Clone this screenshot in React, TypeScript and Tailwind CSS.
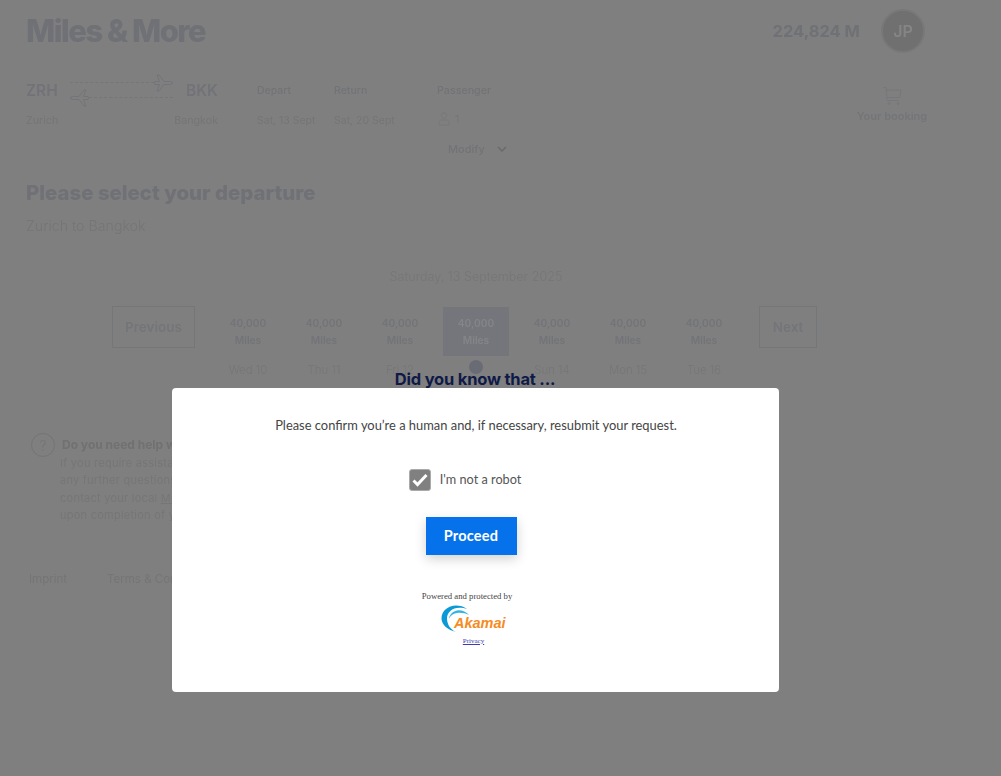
import React from "react";

const Plane = ({ flip }: { flip?: boolean }) => (
  <svg width="19" height="18" viewBox="0 0 19 18" fill="none" stroke="#727377" strokeWidth="0.9" className={"shrink-0 " + (flip ? "rotate-180" : "")}>
    <path d="M1 7.500h4.500L3 1h2l5 6.500h5.500c2 0 3 .8 3 1.500s-1 1.500-3 1.500H10L5 17H3l2.500-6.500H1l-.5-1.500z" />
  </svg>
);

const days = ["Wed 10", "Thu 11", "Fri 12", "", "Sun 14", "Mon 15", "Tue 16"];

function Background() {
  return (
    <div className="h-[776px] overflow-hidden bg-[#7f7f7f] blur-[0.45px] font-['Inter',sans-serif]">
      <div className="flex items-center pl-[26px] pr-[76px] h-[62px]">
        <div className="text-[31px] leading-[44px] font-extrabold tracking-[-1.5px] text-[#6f7176]">Miles &amp; More</div>
        <div className="ml-auto text-[16.500px] font-bold text-[#6f7176]">224,824 M</div>
        <div className="ml-[21px] w-[44px] h-[44px] rounded-full bg-[#707070] border-2 border-[#787878] flex items-center justify-center text-[16px] font-semibold text-[#858585]">JP</div>
      </div>

      <div className="flex pl-[26px] pr-[75px] pt-[17px] h-[78px]">
        <div className="w-[192px]">
          <div className="flex items-center justify-between h-[24px]">
            <span className="text-[15.500px] font-semibold text-[#727378]">ZRH</span>
            <div className="flex flex-col w-[103px] -mt-[2px]">
              <div className="flex items-center h-[15px]">
                <div className="flex-1 border-t border-dashed border-[#757679]" />
                <Plane />
              </div>
              <div className="flex items-center h-[15px]">
                <Plane flip />
                <div className="flex-1 border-t border-dashed border-[#757679]" />
              </div>
            </div>
            <span className="text-[15.500px] font-semibold text-[#727378]">BKK</span>
          </div>
          <div className="flex justify-between mt-[9px] text-[10.700px] leading-[18px] text-[#757575]">
            <span>Zurich</span>
            <span>Bangkok</span>
          </div>
        </div>
        <div className="ml-[39px] w-[77px]">
          <div className="text-[10.500px] leading-[24px] font-medium text-[#727377]">Depart</div>
          <div className="mt-[9px] text-[10.500px] leading-[18px] text-[#757575] whitespace-nowrap">Sat, 13 Sept</div>
        </div>
        <div className="w-[103px]">
          <div className="text-[10.500px] leading-[24px] font-medium text-[#727377]">Return</div>
          <div className="mt-[9px] text-[10.500px] leading-[18px] text-[#757575] whitespace-nowrap">Sat, 20 Sept</div>
        </div>
        <div>
          <div className="text-[10.700px] leading-[20px] font-medium text-[#727377] mt-[2px]">Passenger</div>
          <div className="flex items-center gap-[4px] mt-[9px] h-[18px] text-[11px] text-[#757575]">
            <svg width="14" height="14" viewBox="0 0 14 14" fill="none" stroke="#757679" strokeWidth="0.8">
              <circle cx="7" cy="3.500" r="2.700" />
              <path d="M2 13V10.500c0-1.500 1-2.500 2.500-2.500h5c1.500 0 2.500 1 2.500 2.500V13z" />
            </svg>
            <span>1</span>
          </div>
        </div>
        <div className="ml-auto flex flex-col items-center pt-[7px] w-[68px]">
          <svg width="20" height="20" viewBox="0 0 20 20" fill="none" stroke="#757679" strokeWidth="0.9">
            <path d="M1 1.500h3l1 13h12M4.200 4h14.800l-1.200 7.500H4.800" />
            <circle cx="7" cy="17.500" r="1" />
            <circle cx="16" cy="17.500" r="1" />
          </svg>
          <span className="text-[11px] font-semibold text-[#747579] whitespace-nowrap leading-[20px]">Your booking</span>
        </div>
      </div>

      <div className="flex items-center ml-[448px] h-[18px]">
        <span className="text-[11px] font-medium text-[#727377]">Modify</span>
        <svg className="ml-[11px]" width="12" height="12" viewBox="0 0 12 12" fill="none" stroke="#66686d" strokeWidth="1.300">
          <path d="M2 4l4 4 4-4" />
        </svg>
      </div>

      <div className="pl-[26px] mt-[19px]">
        <div className="text-[20.400px] leading-[32px] font-extrabold text-[#707176]">Please select your departure</div>
        <div className="mt-[6px] text-[14.200px] leading-[22px] font-light text-[#757575]">Zurich to Bangkok</div>
      </div>

      <div className="mt-[27px] pr-[49px] text-center text-[12.600px] leading-[26px] font-light text-[#767676]">Saturday, 13 September 2025</div>

      <div className="relative mt-[17px] pl-[112px] flex items-start h-[88px]">
        <div className="w-[83px] h-[42px] -mt-px border border-[#757679] flex items-center justify-center text-[13.500px] font-semibold text-[#747579]">Previous</div>
        <div className="ml-[15px] flex">
          {days.map((d, i) => (
            <div key={i} className="w-[76px] flex flex-col items-center">
              <div className={"w-[66px] h-[49px] flex flex-col items-center justify-center text-[10.200px] font-semibold leading-[17px] " + (i === 3 ? "bg-[#74767c] text-[#848588]" : "text-[#737478]")}>
                <span>40,000</span>
                <span>Miles</span>
              </div>
              {d ? (
                <span className="mt-[5px] text-[11.400px] leading-[18px] font-light text-[#767676]">{d}</span>
              ) : (
                <span className="mt-[4px] w-[14px] h-[14px] rounded-full bg-[#696c74]" />
              )}
            </div>
          ))}
        </div>
        <div className="ml-[17px] w-[58px] h-[42px] -mt-px border border-[#757679] flex items-center justify-center text-[13.500px] font-semibold text-[#747579]">Next</div>
      </div>

      <div className="pl-[31px] mt-[38px] flex items-start">
        <div className="w-[24px] h-[24px] rounded-full border border-[#747474] flex items-center justify-center text-[14px] font-light text-[#747474]">?</div>
        <div className="ml-[5px] mt-[1px]">
          <div className="ml-[2px] text-[12px] leading-[21px] font-bold text-[#717171] whitespace-nowrap">Do you need help with your booking?</div>
          <div className="text-[11px] leading-[17.400px] tracking-[0.25px] text-[#767676] whitespace-nowrap">
            <div>If you require assistance with your booking, or if you have</div>
            <div>any further questions about your award flight, please</div>
            <div>contact your local <span className="underline">Miles &amp; More service team</span></div>
            <div>upon completion of your reservation.</div>
          </div>
        </div>
      </div>

      <div className="pl-[29px] mt-[45px] flex gap-[40px] text-[11.500px] leading-[18px] text-[#757575]">
        <span>Imprint</span>
        <span>Terms &amp; Conditions</span>
      </div>
    </div>
  );
}

function Akamai() {
  return (
    <div className="relative h-[30px] w-[66px]">
      <svg className="absolute left-0 top-0" width="34" height="28" viewBox="0 0 34 28" fill="none">
        <path d="M15 27C7 25 0.500 20 0.500 13.500 0.500 6 7 0.500 15 0.500c4 0 8 1 11 3.500-2-.8-5-1.300-7.500-1.300C11 2.700 6 7.500 6 13.500 6 19 9 24.500 15 27z" fill="#0b9ad6" />
        <path d="M28 10C25 6.500 20 4.800 16 5.500 12 6.300 8.500 9.500 8 13.500c2-3.500 5.500-5.500 9.500-5.700 3.500-.2 7.500.7 10.500 2.200z" fill="#34b4e4" />
      </svg>
      <span className="absolute left-[13px] top-[8px] text-[14.500px] leading-[20px] font-bold italic text-[#f68b1f] font-['Liberation_Sans',sans-serif]">Akamai</span>
    </div>
  );
}

export default function App() {
  return (
    <div className="relative h-[776px] overflow-hidden">
      <Background />
      <div className="absolute inset-0 flex flex-col items-center pt-[366px] pr-[51px]">
        <div className="w-[607px] text-center text-[16.500px] leading-[26px] font-bold tracking-[-0.2px] text-[#0f1a47] font-['Inter',sans-serif]">Did you know that ...</div>
        <div className="-mt-[4px] w-[607px] h-[304px] bg-white rounded-[4px] flex flex-col items-center font-['Lato',sans-serif] text-[#4a4a4a]">
          <div className="mt-[27px] ml-[2px] text-[12.900px] leading-[20px] text-[#444]">Please confirm you’re a human and, if necessary, resubmit your request.</div>
          <div className="mt-[34px] ml-[-20px] flex items-center h-[22px]">
            <div className="w-[22px] h-[22px] rounded-[3px] bg-[#808080] border border-[#aaa] flex items-center justify-center">
              <svg width="16" height="14" viewBox="0 0 16 14" fill="none" stroke="#fff" strokeWidth="3">
                <path d="M1.500 7.500l4 4L14.500 2" />
              </svg>
            </div>
            <span className="ml-[9px] text-[12.700px] text-[#555]">I'm not a robot</span>
          </div>
          <button className="mt-[26px] ml-[-8px] w-[91px] h-[38px] bg-[#0572ec] text-white text-[14.500px] font-bold tracking-[0.2px] shadow-[0_4px_12px_rgba(0,0,0,0.18)]">Proceed</button>
          <div className="mt-[35px] ml-[-16px] text-[8.700px] leading-[12px] text-[#444] font-['Liberation_Serif',serif]">Powered and protected by</div>
          <div className="mt-[3px] ml-[-2px]"><Akamai /></div>
          <a className="mt-[1px] ml-[-3px] text-[7px] leading-[10px] text-[#3b3bb3] underline font-['Liberation_Serif',serif]">Privacy</a>
        </div>
      </div>
    </div>
  );
}
